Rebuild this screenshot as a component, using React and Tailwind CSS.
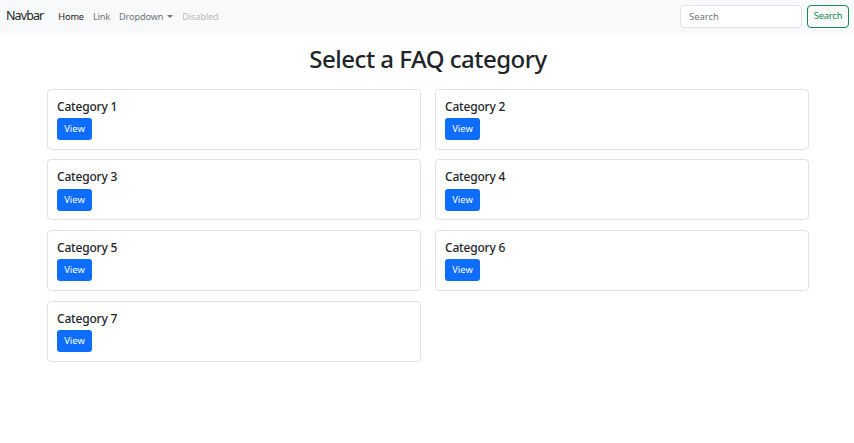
import React from 'react';

const categories = ['Category 1', 'Category 2', 'Category 3', 'Category 4', 'Category 5', 'Category 6', 'Category 7'];

function NavBar() {
  return (
    <nav className="h-[33px] bg-[#f8f9fa] flex items-center justify-between pl-[6px] pr-[5px]">
      <div className="flex items-center">
        <span className="text-[12.5px] tracking-[-0.9px] text-[#212529] mr-[15px]">Navbar</span>
        <ul className="flex items-center gap-[9px] text-[9.2px] tracking-[-0.15px]">
          <li className="text-[#212529]">Home</li>
          <li className="text-[#6c757d]">Link</li>
          <li className="text-[#6c757d] flex items-center">
            Dropdown
            <span className="ml-[4px] w-0 h-0 border-l-[3px] border-r-[3px] border-t-[3.5px] border-l-transparent border-r-transparent border-t-[#6c757d]"></span>
          </li>
          <li className="text-[#b7b9bb]">Disabled</li>
        </ul>
      </div>
      <form className="flex items-center gap-[5px]" onSubmit={e => e.preventDefault()}>
        <input
          placeholder="Search"
          className="w-[122px] h-[23px] bg-white border border-[#dee2e6] rounded-[4px] px-[8px] text-[9.4px] text-[#212529] placeholder:text-[#6c757d] outline-none"
        />
        <button className="h-[23px] w-[42px] border border-[#198754] rounded-[4px] text-[9.4px] tracking-[-0.2px] text-[#198754]">Search</button>
      </form>
    </nav>
  );
}

export default function App() {
  return (
    <div className="min-h-screen bg-white text-[#212529]" style={{ fontFamily: '"Noto Sans", sans-serif' }}>
      <NavBar/>
      <main className="w-[762px] ml-[47px]">
        <h1 className="text-center text-[24px] tracking-[-0.5px] font-medium leading-[1.2] mt-[12px] mb-[15px]">Select a FAQ category</h1>
        <div className="grid grid-cols-2 gap-x-[14px] gap-y-[9.6px]">
          {categories.map(c => (
            <div key={c} className="border border-[#dee2e6] rounded-[4px] h-[61px] px-[9px] pt-[10px]">
              <h5 className="text-[12px] tracking-[-0.2px] font-medium leading-[1.2]">{c}</h5>
              <button className="h-[22px] w-[35px] bg-[#0d6efd] text-white text-[9.4px] rounded-[3px]">View</button>
            </div>
          ))}
        </div>
      </main>
    </div>
  );
}
